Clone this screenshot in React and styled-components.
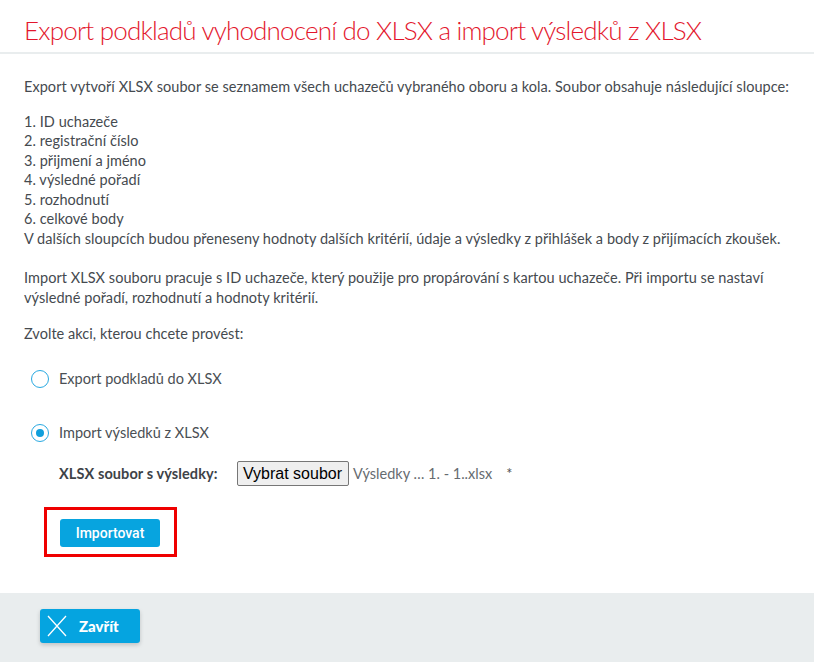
import styled, { createGlobalStyle } from 'styled-components';

const GlobalStyle = createGlobalStyle`
  html, body {
    margin: 0;
    padding: 0;
    background: #ffffff;
  }
  body {
    font-family: Lato, 'Open Sans', sans-serif;
    font-size: 14.5px;
    color: #454a4f;
  }
`;

export default function App() {
  return (
    <>
      <GlobalStyle />
      <Dialog>
        <Header>
          <Title>Export podkladů vyhodnocení do XLSX a import výsledků z XLSX</Title>
        </Header>
        <Body>
          <Paragraph>
            Export vytvoří XLSX soubor se seznamem všech uchazečů vybraného oboru a kola. Soubor obsahuje následující sloupce:
          </Paragraph>
          <Paragraph $gap={20}>
            1. ID uchazeče
            <br />2. registrační číslo
            <br />3. přijmení a jméno
            <br />4. výsledné pořadí
            <br />5. rozhodnutí
            <br />6. celkové body
            <br />V dalších sloupcích budou přeneseny hodnoty dalších kritérií, údaje a výsledky z přihlášek a body z přijímacích zkoušek.
          </Paragraph>
          <Paragraph $gap={17}>
            Import XLSX souboru pracuje s ID uchazeče, který použije pro propárování s kartou uchazeče. Při importu se nastaví výsledné pořadí, rozhodnutí a hodnoty kritérií.
          </Paragraph>
          <Paragraph>Zvolte akci, kterou chcete provést:</Paragraph>

          <RadioRow $top={25}>
            <Radio />
            <RadioLabel>Export podkladů do XLSX</RadioLabel>
          </RadioRow>
          <RadioRow $top={34}>
            <Radio $checked />
            <RadioLabel>Import výsledků z XLSX</RadioLabel>
          </RadioRow>

          <FileRow>
            <FileLabel>XLSX soubor s výsledky:</FileLabel>
            <FileButton type="button">Vybrat soubor</FileButton>
            <FileName>Výsledky … 1. - 1..xlsx</FileName>
            <Required>*</Required>
          </FileRow>

          <Highlight>
            <PrimaryButton type="button">Importovat</PrimaryButton>
          </Highlight>
        </Body>
        <Footer>
          <CloseButton type="button">
            <svg width="20" height="22" viewBox="0 0 20 22">
              <path d="M1 1 L19 21 M19 1 L1 21" stroke="#ffffff" strokeWidth="1.3" fill="none" />
            </svg>
            <span>Zavřít</span>
          </CloseButton>
        </Footer>
      </Dialog>
    </>
  );
}

const Dialog = styled.div`
  display: flex;
  flex-direction: column;
  width: 814px;
  height: 662px;
  background: #ffffff;
`;

const Header = styled.div`
  padding: 14px 24px 0 24px;
  height: 38px;
  border-bottom: 2px solid #e9edee;
`;

const Title = styled.h1`
  margin: 0;
  font-family: Lato, sans-serif;
  font-size: 26px;
  font-weight: 300;
  line-height: 32px;
  color: #e3162c;
  letter-spacing: -0.8px;
`;

const Body = styled.div`
  flex: 1;
  padding: 23px 24px 0 24px;
`;

const Paragraph = styled.p`
  margin: 0 0 ${p => p.$gap || 15}px 0;
  line-height: 19.5px;
  font-size: 14.5px;
  letter-spacing: 0.05px;
`;

const RadioRow = styled.div`
  display: flex;
  align-items: center;
  gap: 10px;
  margin: ${p => p.$top}px 0 0 7px;
  height: 20px;
`;

const Radio = styled.span`
  box-sizing: border-box;
  width: 18px;
  height: 18px;
  border-radius: 50%;
  border: 1.5px solid #29a9e1;
  display: flex;
  align-items: center;
  justify-content: center;
  background: #ffffff;
  &::after {
    content: '';
    display: ${p => (p.$checked ? 'block' : 'none')};
    width: 8px;
    height: 8px;
    border-radius: 50%;
    background: #0f9fdc;
  }
`;

const RadioLabel = styled.span`
  font-size: 14.5px;
  color: #4a4f54;
`;

const FileRow = styled.div`
  display: flex;
  align-items: center;
  margin: 18px 0 0 35px;
  height: 26px;
`;

const FileLabel = styled.span`
  font-weight: bold;
  width: 178px;
  color: #3e4348;
  letter-spacing: 0.1px;
`;

const FileButton = styled.button`
  font-family: 'Liberation Sans', Arial, sans-serif;
  font-size: 16px;
  color: #000000;
  height: 25px;
  padding: 0 6px 0 5px;
  background: #efefef;
  border: 1px solid #767676;
  border-radius: 2px;
`;

const FileName = styled.span`
  margin-left: 4px;
  color: #666b70;
`;

const Required = styled.span`
  margin-left: 14px;
  color: #555;
`;

const Highlight = styled.div`
  display: inline-flex;
  margin: 20px 0 0 20px;
  padding: 9px 14px 7px 13px;
  border: 3px solid #ef0000;
`;

const PrimaryButton = styled.button`
  width: 100px;
  height: 28px;
  border: none;
  border-radius: 3px;
  background: #07a4df;
  color: #ffffff;
  font-family: Roboto, Lato, sans-serif;
  font-size: 14px;
  font-weight: 500;
`;

const Footer = styled.div`
  height: 69px;
  background: #e9edee;
  display: flex;
  align-items: flex-start;
  padding: 16px 0 0 40px;
  box-sizing: border-box;
`;

const CloseButton = styled.button`
  display: flex;
  align-items: center;
  gap: 12px;
  width: 100px;
  height: 34px;
  padding: 0 0 0 7px;
  border: none;
  border-radius: 3px;
  background: #05a4e0;
  box-shadow: 0 2px 4px rgba(0, 0, 0, 0.18);
  color: #ffffff;
  font-family: Lato, sans-serif;
  font-size: 15px;
  font-weight: 900;
`;
